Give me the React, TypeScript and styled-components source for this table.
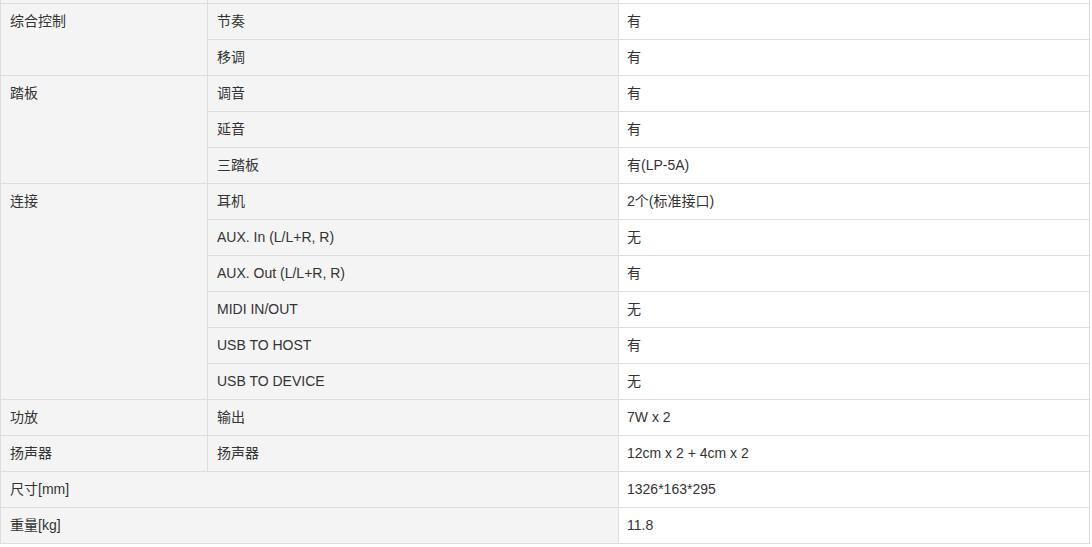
import React from "react";
import styled, { createGlobalStyle } from "styled-components";

const Global = createGlobalStyle`
  html, body { margin: 0; padding: 0; background: #ffffff; }
  body { font-family: "Liberation Sans", "Noto Sans CJK SC", Arial, sans-serif; }
`;

const SpecGrid = styled.div`
  display: grid;
  grid-template-columns: 206px 410px 470px;
  grid-template-rows: 3px;
  grid-auto-rows: 35px;
  gap: 1px;
  padding: 0 1px 1px 1px;
  width: 1088px;
  background: #dddddd;
`;

const Cell = styled.div<{ $kind: "label" | "value"; $rows?: number; $cols?: number }>`
  grid-row: span ${(p) => p.$rows ?? 1};
  grid-column: span ${(p) => p.$cols ?? 1};
  background: ${(p) => (p.$kind === "value" ? "#ffffff" : "#f4f4f4")};
  color: #333333;
  font-size: 14px;
  line-height: 35px;
  padding: 0 9px 0 ${(p) => (p.$kind === "value" ? 8 : 9)}px;
  white-space: nowrap;
  overflow: hidden;
`;

type Group = {
  name: string;
  items: [string, string][];
};

const groups: Group[] = [
  { name: "综合控制", items: [["节奏", "有"], ["移调", "有"]] },
  { name: "踏板", items: [["调音", "有"], ["延音", "有"], ["三踏板", "有(LP-5A)"]] },
  {
    name: "连接",
    items: [
      ["耳机", "2个(标准接口)"],
      ["AUX. In (L/L+R, R)", "无"],
      ["AUX. Out (L/L+R, R)", "有"],
      ["MIDI IN/OUT", "无"],
      ["USB TO HOST", "有"],
      ["USB TO DEVICE", "无"],
    ],
  },
  { name: "功放", items: [["输出", "7W x 2"]] },
  { name: "扬声器", items: [["扬声器", "12cm x 2 + 4cm x 2"]] },
];

const singles: [string, string][] = [
  ["尺寸[mm]", "1326*163*295"],
  ["重量[kg]", "11.8"],
];

export default function App() {
  return (
    <>
      <Global />
      <SpecGrid>
        <Cell $kind="label" />
        <Cell $kind="label" />
        <Cell $kind="value" />
        {groups.map((g) => (
          <React.Fragment key={g.name}>
            <Cell $kind="label" $rows={g.items.length}>{g.name}</Cell>
            {g.items.map(([k, v]) => (
              <React.Fragment key={k}>
                <Cell $kind="label">{k}</Cell>
                <Cell $kind="value">{v}</Cell>
              </React.Fragment>
            ))}
          </React.Fragment>
        ))}
        {singles.map(([k, v]) => (
          <React.Fragment key={k}>
            <Cell $kind="label" $cols={2}>{k}</Cell>
            <Cell $kind="value">{v}</Cell>
          </React.Fragment>
        ))}
      </SpecGrid>
    </>
  );
}
